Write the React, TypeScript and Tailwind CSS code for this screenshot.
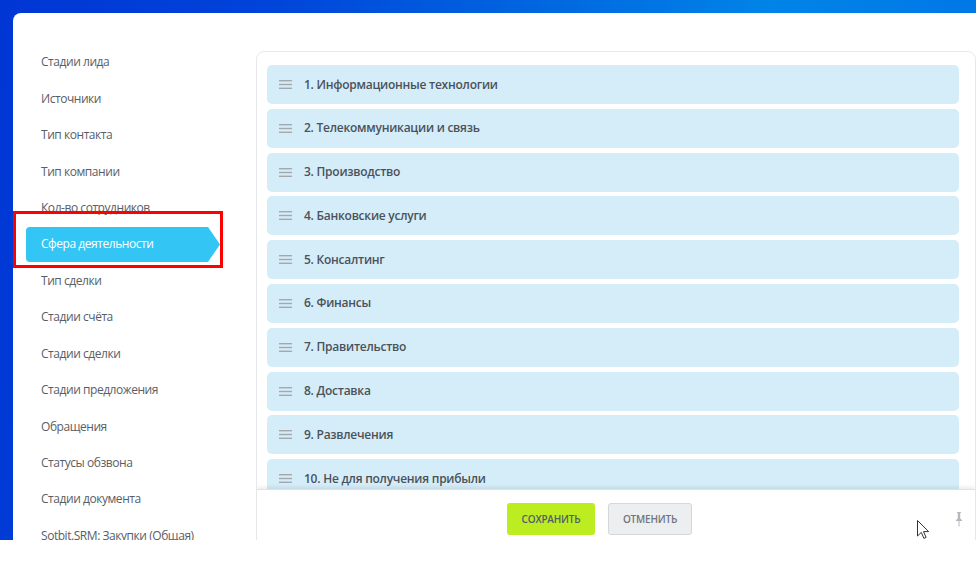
import React from "react";

const sidebar = [
  "Стадии лида",
  "Источники",
  "Тип контакта",
  "Тип компании",
  "Кол-во сотрудников",
  "Сфера деятельности",
  "Тип сделки",
  "Стадии счёта",
  "Стадии сделки",
  "Стадии предложения",
  "Обращения",
  "Статусы обзвона",
  "Стадии документа",
  "Sotbit.SRM: Закупки (Общая)",
];

const items = [
  "1. Информационные технологии",
  "2. Телекоммуникации и связь",
  "3. Производство",
  "4. Банковские услуги",
  "5. Консалтинг",
  "6. Финансы",
  "7. Правительство",
  "8. Доставка",
  "9. Развлечения",
  "10. Не для получения прибыли",
  "11. Другое",
];

function Handle() {
  return (
    <svg width="13" height="9" viewBox="0 0 13 9" className="shrink-0">
      <rect x="0" y="0" width="13" height="1.4" fill="#a3a8ad" />
      <rect x="0" y="3.8" width="13" height="1.4" fill="#a3a8ad" />
      <rect x="0" y="7.6" width="13" height="1.4" fill="#a3a8ad" />
    </svg>
  );
}

export default function App() {
  return (
    <div className="w-[976px] h-[565px] bg-white overflow-hidden" style={{ fontFamily: '"Open Sans", "Noto Sans", sans-serif' }}>
      <div className="h-[540px] bg-[linear-gradient(100deg,#0036d4_0%,#0044da_25%,#0066e0_50%,#0084e8_72%,#0072e6_100%)] pt-[13px] pl-[13px]">
        <div className="relative h-full bg-white rounded-tl-[8px] overflow-hidden flex">
          {/* sidebar */}
          <div className="w-[243px] shrink-0 pt-[31px]">
            {sidebar.map((s) => {
              const active = s === "Сфера деятельности";
              return (
                <div key={s} className="h-[36.45px] flex items-center">
                  {active ? (
                    <div className="relative ml-[13px] w-[194px] h-[35px] flex items-center pl-[15px] bg-[#33c6f4] rounded-l-[4px] text-white text-[12px] tracking-[-0.45px] [clip-path:polygon(0_0,calc(100%-12px)_0,100%_50%,calc(100%-12px)_100%,0_100%)]">
                      {s}
                    </div>
                  ) : (
                    <div className="pl-[28px] text-[12px] tracking-[-0.45px] text-[#585e66] whitespace-nowrap">{s}</div>
                  )}
                </div>
              );
            })}
          </div>
          {/* red annotation */}
          <div className="absolute left-0 top-[198px] w-[210px] h-[57px] border-[3px] border-[#ff0000] pointer-events-none" />

          {/* main panel */}
          <div className="mt-[38px] w-[720px] h-[520px] shrink-0 border border-[#e6e8ea] rounded-[8px] flex flex-col overflow-hidden">
            <div className="h-[437px] overflow-hidden pt-[13px] pl-[10px] pr-[16px] flex flex-col gap-[4.8px]">
              {items.map((t) => (
                <div key={t} className="h-[39px] shrink-0 bg-[#d5edf9] rounded-[5px] flex items-center pl-[12px] gap-[12px]">
                  <Handle />
                  <span className="text-[12px] tracking-[-0.25px] font-semibold text-[#4b525a]">{t}</span>
                </div>
              ))}
            </div>
            <div className="relative flex-1 bg-white border-t border-[#dfe1e3] shadow-[0_-2px_4px_rgba(0,0,0,0.08)] flex items-start pt-[13px] pl-[250px] gap-[13px]">
              <button className="h-[32px] w-[88px] rounded-[3px] bg-[#bbed21] text-[10px] tracking-[-0.2px] font-semibold text-[#535c69] uppercase">
                Сохранить
              </button>
              <button className="h-[32px] w-[84px] rounded-[3px] bg-[#eceef0] border border-[#d5d8db] text-[10px] tracking-[-0.2px] font-semibold text-[#6f757c] uppercase">
                Отменить
              </button>
              <svg className="absolute left-[697px] top-[21px]" width="10" height="16" viewBox="0 0 10 16">
                <path d="M3 1h4v1H6.2v5.5L8 9v1H5.5v5.5h-1V10H2V9l1.8-1.5V2H3z" fill="#b5b9bd" />
              </svg>
            </div>
          </div>

          {/* cursor */}
          <svg className="absolute left-[904px] top-[507px]" width="12" height="19" viewBox="0 0 12 19">
            <path d="M0.5 0.5v15.5l3.8-3.6 2.6 6 2.2-1-2.6-5.8h5.2z" fill="#fff" stroke="#333" strokeWidth="1" strokeLinejoin="round" />
          </svg>
        </div>
      </div>
    </div>
  );
}
